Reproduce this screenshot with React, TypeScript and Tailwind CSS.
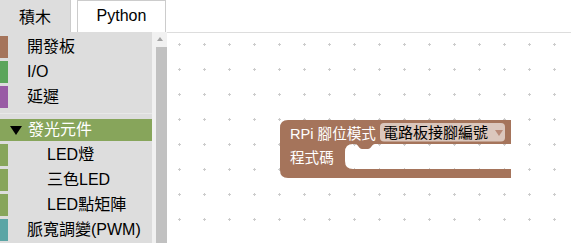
const FONT = "font-['Liberation_Sans','Noto_Sans_CJK_TC',sans-serif]"

type Row = { label: string; color: string; indent?: boolean }

const topRows: Row[] = [
  { label: '開發板', color: '#a5745b' },
  { label: 'I/O', color: '#5ba55b' },
  { label: '延遲', color: '#995ba5' },
]

const subRows: Row[] = [
  { label: 'LED燈', color: '#87a55b', indent: true },
  { label: '三色LED', color: '#87a55b', indent: true },
  { label: 'LED點矩陣', color: '#87a55b', indent: true },
  { label: '脈寬調變(PWM)', color: '#5ba5a5' },
]

function TreeRow({ row }: { row: Row }) {
  return (
    <div className="mb-[3px] flex h-[22px] shrink-0 items-center">
      <div className="h-full w-[8px] shrink-0" style={{ backgroundColor: row.color }} />
      <span className={`whitespace-nowrap text-[16px] leading-[22px] text-black ${row.indent ? 'pl-[39px]' : 'pl-[19px]'}`}>
        {row.label}
      </span>
    </div>
  )
}

function Block() {
  // statement block drawn on the free canvas
  const path =
    'M0,8 Q0,0 8,0 H231 V24 H95 C92,24 91,29 88,29 H82 C79,29 78,24 75,24 H73 Q65,24 65,32 V41 Q65,49 73,49 H231 V58 H8 Q0,58 0,50 Z'
  const ff = "'Liberation Sans','Noto Sans CJK TC',sans-serif"
  return (
    <svg className="absolute left-[113px] top-[87px]" width="232" height="59" viewBox="0 0 232 59">
      <path d={path} fill="#a5745b" />
      <text x="10" y="13.5" fill="#fff" fontSize="14.6" dominantBaseline="central" fontFamily={ff}>
        RPi 腳位模式
      </text>
      <rect x="100" y="3" width="125" height="18.5" rx="4" fill="#dbc7bd" />
      <text x="103" y="12.5" fill="#000" fontSize="15" dominantBaseline="central" fontFamily={ff}>
        電路板接腳編號
      </text>
      <path d="M215,10 H223 L219,16 Z" fill="#b88a78" />
      <text x="10" y="38" fill="#fff" fontSize="14.6" dominantBaseline="central" fontFamily={ff}>
        程式碼
      </text>
    </svg>
  )
}

export default function App() {
  return (
    <div className={`flex h-[243px] w-[571px] flex-col overflow-hidden bg-white ${FONT}`}>
      <div className="flex h-[32px] shrink-0">
        <div className="flex w-[71px] items-center justify-center border-r border-[#ccc] bg-[#ddd] pt-[3px] text-[16px] text-black">
          積木
        </div>
        <div className="w-[6px]" />
        <div className="flex w-[89px] items-center justify-center border border-b-0 border-[#ccc] pb-[2px] text-[16px] text-black">
          Python
        </div>
      </div>
      <div className="flex min-h-0 flex-1">
        <div className="flex w-[152px] shrink-0 flex-col overflow-hidden bg-[#ddd] pt-[4px]">
          {topRows.map((r) => (
            <TreeRow key={r.label} row={r} />
          ))}
          <div className="mb-[5px] mt-[2px] h-px shrink-0 bg-[#e8e8e8]" />
          <div className="mb-[3px] flex h-[22px] shrink-0 items-center bg-[#87a55b]">
            <div className="ml-[10px] h-0 w-0 border-x-[6px] border-t-[9px] border-x-transparent border-t-black" />
            <span className="pl-[6px] text-[16px] leading-[22px] text-white">發光元件</span>
          </div>
          {subRows.map((r) => (
            <TreeRow key={r.label} row={r} />
          ))}
        </div>
        <div className="flex w-[15px] shrink-0 flex-col items-center bg-[#f1f1f1] pt-[5px]">
          <div className="h-0 w-0 border-x-[3.5px] border-b-[4px] border-x-transparent border-b-[#a3a3a3]" />
          <div className="mt-[6px] ml-[3px] w-[11px] flex-1 bg-[#c1c1c1]" />
        </div>
        <div className="relative flex-1 border-t border-[#ddd]">
          <svg className="absolute inset-0" width="100%" height="100%">
            <defs>
              <pattern id="grid" width="25" height="25" x="0" y="-1" patternUnits="userSpaceOnUse">
                <path d="M11,12.5 H14 M12.5,11 V14" stroke="#ccc" strokeWidth="1" />
              </pattern>
            </defs>
            <rect width="100%" height="100%" fill="url(#grid)" />
          </svg>
          <Block />
        </div>
      </div>
    </div>
  )
}
